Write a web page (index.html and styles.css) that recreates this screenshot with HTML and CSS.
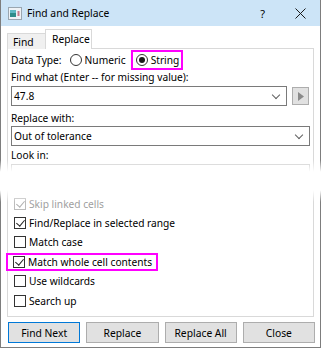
FILE: index.html
```html
<!DOCTYPE html>
<html>
<head>
<meta charset="utf-8">
<link rel="stylesheet" href="styles.css">
</head>
<body>
<div class="window">
  <div class="titlebar">
    <svg class="appicon" width="14" height="13" viewBox="0 0 14 13">
      <rect x="0.5" y="0.5" width="13" height="12" fill="#eef2f6" stroke="#9aa6b0"/>
      <rect x="2" y="3" width="6" height="7" fill="#2e8c8a"/>
      <rect x="2" y="3" width="6" height="3" fill="#5fb9c4"/>
      <rect x="9.5" y="4" width="2" height="5" fill="#c77a8a"/>
    </svg>
    <span class="title">Find and Replace</span>
    <span class="help">?</span>
    <svg class="closex" width="11" height="11" viewBox="0 0 11 11">
      <path d="M0.5 0.5 L10.5 10.5 M10.5 0.5 L0.5 10.5" stroke="#1a1a1a" stroke-width="1" fill="none"/>
    </svg>
  </div>

  <div class="tabs">
    <div class="tab">Find</div>
    <div class="tab active">Replace</div>
  </div>

  <div class="panel">
    <div class="typerow">
      <span class="label">Data Type:</span>
      <span class="radio"></span><span class="rlabel">Numeric</span>
      <span class="hl strbox"><span class="radio on"></span><span class="rlabel">String</span></span>
    </div>

    <div class="label findwhat">Find what (Enter -- for missing value):</div>
    <div class="comborow">
      <div class="combo grow"><span class="val">47.8</span><span class="chev"></span></div>
      <div class="arrowbtn"><svg width="6" height="9" viewBox="0 0 6 9"><path d="M0 0 L6 4.5 L0 9 Z" fill="#8a8a8a"/></svg></div>
    </div>

    <div class="label replwith">Replace with:</div>
    <div class="combo full"><span class="val">Out of tolerance</span><span class="chev"></span></div>

    <div class="label lookin">Look in:</div>
    <div class="combo full faded"></div>

    <div class="checks">
      <div class="chk disabled"><span class="box on"></span><span>Skip linked cells</span></div>
      <div class="chk"><span class="box on"></span><span>Find/Replace in selected range</span></div>
      <div class="chk"><span class="box"></span><span>Match case</span></div>
      <div class="chk"><span class="hl chkhl"><span class="box on"></span><span>Match whole cell contents</span></span></div>
      <div class="chk"><span class="box"></span><span>Use wildcards</span></div>
      <div class="chk"><span class="box"></span><span>Search up</span></div>
    </div>
  </div>

  <div class="buttons">
    <div class="btn default">Find Next</div>
    <div class="btn">Replace</div>
    <div class="btn">Replace All</div>
    <div class="btn">Close</div>
  </div>

  <div class="fade"></div>
</div>
</body>
</html>
```

FILE: styles.css
```css
* { box-sizing: border-box; }
html, body { margin: 0; padding: 0; background: #fff; }

.window {
  position: relative;
  width: 321px;
  height: 348px;
  border: 1px solid #7d7d7d;
  border-top: none;
  background: #fff;
  display: flex;
  flex-direction: column;
  font-family: "Noto Sans", "Open Sans", sans-serif;
  font-size: 10.2px;
  color: #000;
}

.titlebar {
  height: 26px;
  background: #cce4f7;
  display: flex;
  align-items: center;
  padding-left: 7px;
  padding-right: 14px;
  flex-shrink: 0;
}
.appicon { flex-shrink: 0; }
.title { margin-left: 5px; font-size: 10.3px; flex: 1; }
.help { font-size: 11px; margin-right: 30px; }
.closex { flex-shrink: 0; }

.tabs {
  display: flex;
  align-items: flex-end;
  margin: 3px 0 0 6px;
  height: 20px;
  position: relative;
  z-index: 1;
  margin-bottom: -1px;
}
.tab {
  height: 16px;
  width: 39px;
  border: 1px solid #d9d9d9;
  border-bottom: none;
  background: #f0f0f0;
  display: flex;
  align-items: center;
  padding-left: 5px;
  font-size: 10.3px;
}
.tab.active {
  height: 20px;
  width: 47px;
  margin-left: -1px;
  background: #fff;
  padding-left: 6px;
  padding-bottom: 2px;
}

.panel {
  margin: 0 6px 0 6px;
  height: 269px;
  border: 1px solid #d9d9d9;
  padding: 1px 3px 0 3px;
  display: flex;
  flex-direction: column;
  flex-shrink: 0;
}

.label { line-height: 14px; height: 14px; white-space: nowrap; }

.typerow {
  display: flex;
  align-items: center;
  height: 20px;
}
.typerow > .label { margin-right: 8px; }

.radio {
  width: 12px;
  height: 12px;
  border: 1px solid #333;
  border-radius: 50%;
  background: #fff;
  display: inline-flex;
  align-items: center;
  justify-content: center;
  flex-shrink: 0;
}
.radio.on::after {
  content: "";
  width: 6px;
  height: 6px;
  border-radius: 50%;
  background: #1a1a1a;
}
.rlabel { margin-left: 3px; }

.hl {
  border: 2px solid #ff00ff;
  display: inline-flex;
  align-items: center;
}
.strbox {
  margin-left: 5px;
  height: 20px;
  padding: 0 2px 0 3px;
}

.findwhat { margin-top: 0; }
.comborow { display: flex; align-items: center; margin-top: 2px; gap: 5px; }
.combo {
  height: 20px;
  border: 1px solid #7a7a7a;
  background: #fff;
  display: flex;
  align-items: center;
  padding-left: 2px;
  padding-right: 5px;
}
.combo.grow { width: 276px; }
.val { flex: 1; }
.chev {
  width: 6px;
  height: 6px;
  border-right: 1px solid #606060;
  border-bottom: 1px solid #606060;
  transform: rotate(45deg);
  margin-bottom: 3px;
  margin-right: 2px;
}
.arrowbtn {
  width: 17px;
  height: 18px;
  background: #e1e1e1;
  border: 1px solid #adadad;
  display: flex;
  align-items: center;
  justify-content: center;
  padding-left: 1px;
}

.replwith { margin-top: 5px; }
.combo.full { margin-top: 1px; }
.lookin { margin-top: 2px; }
.combo.faded { margin-top: 2px; border-color: #c8c8c8; }

.checks { margin-top: 10px; display: flex; flex-direction: column; }
.chk {
  height: 19.4px;
  display: flex;
  align-items: center;
  padding-left: 3px;
  gap: 3px;
  white-space: nowrap;
}
.chk.disabled { color: #a0a0a0; }
.box {
  width: 12px;
  height: 12px;
  border: 1px solid #333;
  background: #fff;
  flex-shrink: 0;
  position: relative;
}
.chk.disabled .box { border-color: #bcbcbc; }
.box.on::after {
  content: "";
  position: absolute;
  left: 3px;
  top: 0px;
  width: 4px;
  height: 7px;
  border-right: 1px solid #222;
  border-bottom: 1px solid #222;
  transform: rotate(40deg);
}
.chk.disabled .box.on::after { border-color: #b0b0b0; }
.chkhl {
  margin-left: -8px;
  padding: 0 4px 0 5px;
  height: 18px;
  gap: 3px;
}

.buttons {
  display: grid;
  grid-template-columns: repeat(4, 1fr);
  gap: 6px;
  padding: 0 5px 0 7px;
  margin-top: 5px;
}
.btn {
  height: 21px;
  background: #e1e1e1;
  border: 1px solid #adadad;
  display: flex;
  align-items: center;
  justify-content: center;
  font-size: 10.3px;
}
.btn.default { border-color: #0078d7; }

.fade {
  position: absolute;
  left: -1px;
  right: -1px;
  top: 160px;
  height: 42px;
  background: linear-gradient(to bottom, rgba(255,255,255,0) 0%, #fff 28%, #fff 72%, rgba(255,255,255,0) 100%);
  z-index: 5;
}
```
